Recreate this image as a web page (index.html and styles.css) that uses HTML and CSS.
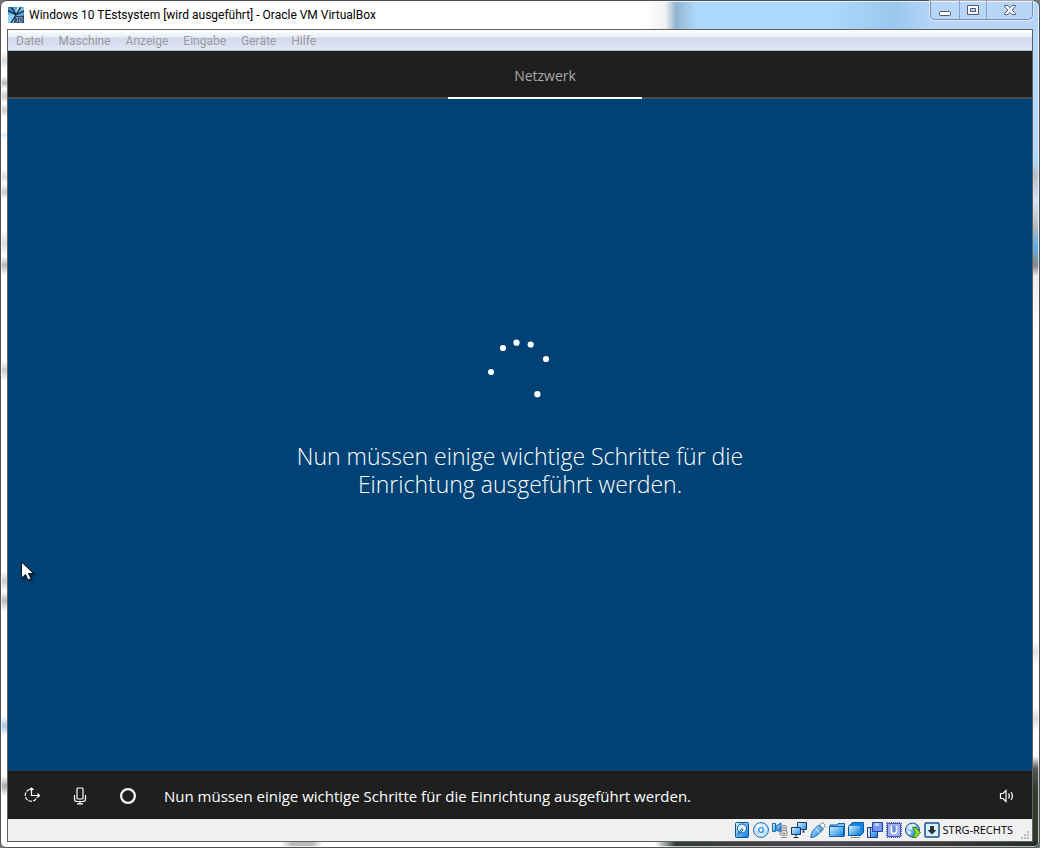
FILE: index.html
```html
<!DOCTYPE html>
<html lang="de">
<head>
<meta charset="utf-8">
<meta name="viewport" content="width=device-width, initial-scale=1">
<title>Windows 10 TEstsystem [wird ausgeführt] - Oracle VM VirtualBox</title>
<link rel="stylesheet" href="styles.css">
</head>
<body>
<div class="window">
  <header class="titlebar">
    <svg class="app-icon" viewBox="0 0 16 16" aria-hidden="true">
      <defs><linearGradient id="app" x1="0" y1="0" x2="1" y2="1"><stop offset="0" stop-color="#2d78b5"/><stop offset=".5" stop-color="#7cc4ee"/><stop offset="1" stop-color="#183c66"/></linearGradient></defs>
      <rect width="16" height="16" fill="url(#app)"/>
      <path d="M0 7 5 8 8 10 5 16H0Z" fill="#8fd0f5"/>
      <path d="M9 0h4L8 6z" fill="#a9dcf8"/>
      <path d="M0 3.500 8 7.500 16 4M13 0 3 16M3 0 8 7.500" stroke="#122338" stroke-width="1.300" fill="none"/>
      <path d="M7 9h9v7H6z" fill="#27476e"/>
      <path d="M8 10.500h2l-1 1.500 1 1-1 2H7.500M12 10.500h1.500l1 2-1 2.500h-2z" fill="none" stroke="#a9cbe3" stroke-width=".8"/>
    </svg>
    <h1 class="title">Windows 10 TEstsystem [wird ausgeführt] - Oracle VM VirtualBox</h1>
    <div class="controls">
      <button class="control control-min" aria-label="Minimieren"><svg width="12" height="12" viewBox="0 0 12 12"><rect x=".5" y="7.500" width="11" height="4" rx="1" fill="#fff" stroke="#50586a"/></svg></button>
      <button class="control control-max" aria-label="Maximieren"><svg width="12" height="12" viewBox="0 0 12 12"><path d="M.5 1.500h11v9H.5zM3.500 4.500v3h5v-3z" fill="#fff" fill-rule="evenodd" stroke="#50586a"/></svg></button>
      <button class="control control-close" aria-label="Schließen"><svg width="12" height="12" viewBox="0 0 12 12"><path d="M.6 1.500h3.200L6 3.700l2.200-2.200h3.200v1L8.200 6l3.200 3.500v1H8.200L6 8.300l-2.200 2.200H.6v-1L3.800 6 .6 2.500z" fill="#fff" stroke="#50586a"/></svg></button>
    </div>
  </header>

  <div class="client">
    <nav class="menubar" aria-label="Menü">
      <button class="menu" disabled>Datei</button>
      <button class="menu" disabled>Maschine</button>
      <button class="menu" disabled>Anzeige</button>
      <button class="menu" disabled>Eingabe</button>
      <button class="menu" disabled>Geräte</button>
      <button class="menu" disabled>Hilfe</button>
    </nav>

    <div class="steps"><div class="step">Netzwerk</div></div>

    <main class="setup">
      <svg class="spinner" width="64" height="64" viewBox="0 0 64 64" role="img" aria-label="Wird geladen">
        <g fill="#fff"><circle cx="3" cy="34" r="3.100"/><circle cx="15" cy="10" r="3.100"/><circle cx="28.500" cy="4.700" r="3.100"/><circle cx="42.700" cy="6.500" r="3.100"/><circle cx="58" cy="21" r="3.100"/><circle cx="49.400" cy="56.200" r="3.100"/></g>
      </svg>
      <p class="message">Nun müssen einige wichtige Schritte für die Einrichtung ausgeführt werden.</p>
      <svg class="pointer" width="16" height="22" viewBox="0 0 16 22" aria-hidden="true"><path d="M.5 1v16l4-3.500L7 19l3-1.300L7.500 12.500h5z" fill="#fff" stroke="#001120"/></svg>
    </main>

    <footer class="cortana">
      <button class="tool" aria-label="Erleichterte Bedienung"><svg width="18" height="18" viewBox="0 0 18 18"><g fill="none" stroke="#fff" stroke-width="1.200"><path d="M6.500 2.500A6 6 0 1 0 14 10" stroke-dasharray="3.500 1.200"/><path d="M8.500 1v7.500H17M6.500 3l2-2 2 2M14.500 6.500l2 2-2 2"/></g></svg></button>
      <button class="tool" aria-label="Mikrofon"><svg width="18" height="18" viewBox="0 0 18 18"><g fill="none" stroke="#fff" stroke-width="1.200"><rect x="6" y="1" width="6" height="11" rx="1"/><path d="M3.500 8v4q0 2.500 2.500 2.500h6q2.500 0 2.500-2.500V8M9 14.500V17M6 16.800h6"/></g></svg></button>
      <button class="tool" aria-label="Cortana"><svg width="18" height="18" viewBox="0 0 18 18"><circle cx="9" cy="9" r="6.900" fill="none" stroke="#f4f4f4" stroke-width="2.200"/></svg></button>
      <p class="spoken">Nun müssen einige wichtige Schritte für die Einrichtung ausgeführt werden.</p>
      <button class="tool" aria-label="Lautstärke"><svg width="18" height="18" viewBox="0 0 18 18"><g fill="none" stroke="#fff" stroke-width="1.200"><path d="M2.500 6.500H5l3-3v11l-3-3H2.500z"/><path d="M10.500 6.500q1.800 2.500 0 5M13 5q2.800 4 0 8"/></g></svg></button>
    </footer>

    <div class="statusbar">
      <svg width="0" height="0" class="defs" aria-hidden="true"><defs><linearGradient id="blue" x1="0" y1="0" x2="1" y2="1"><stop offset="0" stop-color="#d5f4ff"/><stop offset="1" stop-color="#087bdf"/></linearGradient></defs></svg>
      <svg class="device" viewBox="0 0 16 16"><rect x="1.500" y=".5" width="13" height="15" rx="1" fill="url(#blue)" stroke="#0756aa"/><circle cx="8" cy="6.500" r="4.500" fill="#e4f6ff" stroke="#0756aa"/><path d="M3.500 12.500 8 6.500q2 1 0 3l-2.500 1.200z" fill="#fff" stroke="#0756aa"/></svg>
      <svg class="device" viewBox="0 0 16 16"><circle cx="8" cy="8" r="7.400" fill="#d6edfb" stroke="#1763b5"/><path d="M8 8 3 3.500A7 7 0 0 1 7 1.500z" fill="#fff"/><path d="M8 8l6 2-3 4z" fill="#a9eee0"/><path d="M8 8 2 10l3 4z" fill="#d8cdf7"/><circle cx="8" cy="8" r="2.300" fill="#fff" stroke="#238be0" stroke-width="1.300"/></svg>
      <svg class="device" viewBox="0 0 16 16"><path d="M.5 1.500h3v8h-3zM4 4l5-3v9L4 8z" fill="url(#blue)" stroke="#1268b8"/><rect x="9.500" y="3.500" width="5" height="8" rx="1" fill="#d4d4d4" stroke="#969696"/><path d="M8 9v4h8V9M12 13v2.500M9 15.500h6M9.500 6h5M9.500 8.500h5" fill="none" stroke="#969696"/></svg>
      <svg class="device" viewBox="0 0 16 16"><path d="M6.500.5h9v7h-9zM11 10h3M12.500 8v2" fill="url(#blue)" stroke="#18385c"/><path d="M.5 5.500h9v7h-9zM2.500 15.500h5M5 13v2" fill="url(#blue)" stroke="#18385c"/></svg>
      <svg class="device" viewBox="0 0 16 16"><path d="m9.500 3 3-2.500 3 3-2.500 3z" fill="#fff" stroke="#777"/><path d="m8.500 3 4.500 4.500-5 5Q5 15.500.7 15.500 1 11 3.500 8z" fill="url(#blue)" stroke="#1763b5"/><path d="m6 7 3.500 3.500" stroke="#dff5ff"/></svg>
      <svg class="device" viewBox="0 0 16 16"><path d="M1 14V3h7l1-1.500h6.500V14z" fill="#78c6fa" stroke="#0f62b4"/><path d="M.5 4.500h14v10H.5z" fill="url(#blue)" stroke="#0f62b4"/></svg>
      <svg class="device" viewBox="0 0 16 16"><path d="m.5 4.500 4-4h11v10l-3 3H.5z" fill="#1688e4" stroke="#0756aa"/><path d="M1 4h11v9H1z" fill="url(#blue)"/><path d="M3 15.500h9" stroke="#888"/></svg>
      <svg class="device" viewBox="0 0 16 16"><path d="M.5 5.500h10v10H.5z" fill="url(#blue)" stroke="#243b8c"/><path d="M.5 5.500h3v10h-3z" fill="#d4e6ff" stroke="#243b8c"/><path d="M5.500.5h10v9h-10z" fill="#719bf1" stroke="#2c3eaa"/><path d="M8 1h4v3H8z" fill="#c3d4ff"/></svg>
      <svg class="device" viewBox="0 0 16 16"><path d="M1 .5h14M1 15.500h14M.5 1v14M15.500 1v14" stroke="#4559b9" stroke-dasharray="1 1"/><path d="M1.500 1.500h13v13h-13z" fill="#9db0ef" stroke="#4559b9"/><path d="M5.500 4v5q0 2.500 2.500 2.500t2.500-2.500V4" fill="#6685d8" stroke="#fff" stroke-width="1.600"/></svg>
      <svg class="device" viewBox="0 0 16 16"><circle cx="7.500" cy="8" r="7" fill="url(#blue)" stroke="#245382"/><path d="M2 5q4-5 9-2L7 8 3 7z" fill="#d8eaf5"/><path d="M2 8l4 2-1 3q-3-2-3-5" fill="#fff"/><path d="M7.500 5.500H11l4.500 5-4.500 5H7.500l3-5z" fill="#8ddd2f" stroke="#287824"/></svg>
      <svg class="device" viewBox="0 0 16 16"><rect x="1" y="1" width="14" height="14" rx="1" fill="#d8f1fc" stroke="#14548e" stroke-width="1.500"/><path d="M6 4h4v4h2.500L8 12.500 3.500 8H6z" fill="#333"/></svg>
      <span class="hostkey">STRG-RECHTS</span>
      <svg class="grip" width="10" height="10" viewBox="0 0 10 10" aria-hidden="true"><path d="M7 0h2v2H7zM4 3h2v2H4zM7 3h2v2H7zM1 6h2v2H1zM4 6h2v2H4zM7 6h2v2H7z" fill="#bcbcbc"/></svg>
    </div>
  </div>
</div>
</body>
</html>
```
FILE: styles.css
```css
* { box-sizing: border-box; }

body {
  margin: 0;
  font-family: "Open Sans", "Noto Sans", sans-serif;
  background: #777;
}

button {
  margin: 0;
  padding: 0;
  border: 0;
  background: none;
  font: inherit;
  color: inherit;
}

svg { display: block; flex: none; }

.window {
  display: flex;
  flex-direction: column;
  min-height: 100vh;
  padding: 0 6px 5px;
  border: 1px solid #4b5259;
  border-radius: 7px 7px 6px 6px;
  box-shadow: inset 0 0 0 1px #ffffffb0;
  background:
    linear-gradient(90deg, #fff 0 27%, #bbb 28% 30%, #fff 31% 63%, #373b31 65%, #4b4650 80%, #292d23) bottom / 100% 6px no-repeat,
    linear-gradient(#b4d6f7 0 150px, #acd8fb 160px, #b8bfcb 175px, #d6e5f5 200px, #bbb 225px, #62aee6 245px, #888 265px, #eee 275px, #fff 340px 640px, #e5e5e5 650px, #fff 665px 705px, #ddd 718px, #fff 730px 755px, #555 768px, #34382e 790px) right / 6px 100% no-repeat,
    linear-gradient(#fff 0 50px, #ddd 60px, #fff 68px 75px, #bbb 82px, #fff 88px, #ccc 95px, #fff 102px, #ccc 109px, #fff 116px 130px, #dceef6 134px, #fff 138px 168px, #ddd 176px, #fff 182px, #ccc 191px, #fff 198px 230px, #ddd 242px, #fff 255px, #bbb 264px, #fff 275px 360px, #ccc 369px, #fff 380px 570px, #ccc 580px, #fff 590px, #bbb 600px, #fff 610px 715px, #a8cbe5 725px, #fff 735px 775px, #aaa 785px, #fff 795px) left / 6px 100% no-repeat,
    linear-gradient(90deg, #fff 0 62%, #f1f1f1 64%, #93b5d2 65%, #acd8fb 67% 80%, #9ac7ee 86%, #b8d6f8 90%);
}

.titlebar {
  display: flex;
  align-items: flex-start;
  height: 28px;
}

.app-icon {
  width: 16px;
  height: 16px;
  margin: 6px 5px 0 1px;
}

.title {
  flex: 1;
  margin: 0;
  font-family: Roboto, "Open Sans", sans-serif;
  font-size: 12px;
  font-weight: 400;
  line-height: 28px;
  white-space: nowrap;
}

.controls {
  display: flex;
  height: 19px;
  border: 1px solid #7a8ea6;
  border-top: 0;
  border-radius: 0 0 5px 5px;
  box-shadow: 0 0 0 1px #ffffff80;
}

.control {
  display: flex;
  justify-content: center;
  padding-top: 3px;
}

.control + .control { border-left: 1px solid #8aa2be; }
.control-min { width: 28px; }
.control-max { width: 27px; }
.control-close { width: 46px; }

.client {
  display: flex;
  flex: 1;
  flex-direction: column;
  border: 1px solid #5d6267;
}

.menubar {
  display: flex;
  gap: 15px;
  height: 21px;
  padding: 0 8px;
  border-bottom: 1px solid #b4b8cc;
  background: linear-gradient(#fff, #e9edf5 7px, #d4daec 8px, #e0e5f4);
}

.menu {
  color: #9a9a9f;
  font-family: Roboto, "Open Sans", sans-serif;
  font-size: 12px;
  line-height: 22px;
}

.steps {
  display: flex;
  justify-content: center;
  height: 48px;
  padding-left: 50px;
  background: #1f1f1f;
  box-shadow: inset 0 -2px #4c4a48;
}

.step {
  width: 194px;
  border-bottom: 2px solid #fff;
  color: #a9a9a9;
  font-size: 14px;
  line-height: 49px;
  text-align: center;
}

.setup {
  position: relative;
  display: flex;
  flex: 1;
  flex-direction: column;
  align-items: center;
  justify-content: center;
  gap: 40px;
  padding-bottom: 35px;
  background: #004275;
}

.message {
  max-width: 480px;
  margin: 0;
  color: #fff;
  font-size: 23px;
  font-weight: 300;
  line-height: 28px;
  text-align: center;
}

.pointer {
  position: absolute;
  left: 13px;
  bottom: 188px;
  filter: drop-shadow(2px 2px 1px #0006);
}

.cortana {
  display: flex;
  align-items: center;
  gap: 30px;
  height: 48px;
  padding: 2px 16px 0 15px;
  background: #1f1f1f;
  color: #fff;
}

.spoken {
  flex: 1;
  margin: 0 0 0 -3px;
  font-size: 15px;
  line-height: 20px;
}

.statusbar {
  display: flex;
  align-items: center;
  justify-content: flex-end;
  gap: 3px;
  height: 22px;
  padding-right: 2px;
  background: #f0f0f0;
}

.defs { position: absolute; }
.device { width: 16px; height: 16px; }

.hostkey {
  font-size: 11px;
  line-height: 20px;
}

.grip {
  align-self: flex-end;
  margin-left: 4px;
}
```
